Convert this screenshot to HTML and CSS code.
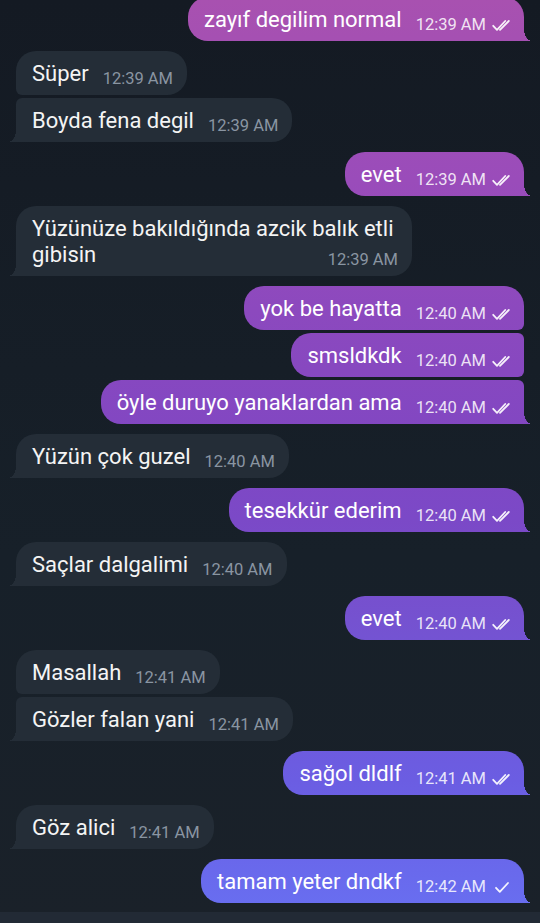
FILE: index.html
```html
<!DOCTYPE html>
<html lang="tr">
<head>
  <meta charset="UTF-8">
  <meta name="viewport" content="width=device-width, initial-scale=1">
  <title>Sohbet</title>
  <link rel="stylesheet" href="styles.css">
</head>
<body>

  <div class="chat">
    <div class="msg out tail">zayıf degilim normal<span class="meta">12:39 AM<svg class="ticks" viewBox="0 0 22 13"><path d="M1.2 6.8 L5 10.8 L13.2 2"/><path d="M8 10.8 L16.8 2"/></svg></span></div>

    <div class="msg in head">Süper<span class="meta">12:39 AM</span></div>
    <div class="msg in after tail">Boyda fena degil<span class="meta">12:39 AM</span></div>

    <div class="msg out tail">evet<span class="meta">12:39 AM<svg class="ticks" viewBox="0 0 22 13"><path d="M1.2 6.8 L5 10.8 L13.2 2"/><path d="M8 10.8 L16.8 2"/></svg></span></div>

    <div class="msg in tail wide">Yüzünüze bakıldığında azcik balık etli gibisin<span class="meta">12:39 AM</span></div>

    <div class="msg out head">yok be hayatta<span class="meta">12:40 AM<svg class="ticks" viewBox="0 0 22 13"><path d="M1.2 6.8 L5 10.8 L13.2 2"/><path d="M8 10.8 L16.8 2"/></svg></span></div>
    <div class="msg out after head">smsldkdk<span class="meta">12:40 AM<svg class="ticks" viewBox="0 0 22 13"><path d="M1.2 6.8 L5 10.8 L13.2 2"/><path d="M8 10.8 L16.8 2"/></svg></span></div>
    <div class="msg out after tail">öyle duruyo yanaklardan ama<span class="meta">12:40 AM<svg class="ticks" viewBox="0 0 22 13"><path d="M1.2 6.8 L5 10.8 L13.2 2"/><path d="M8 10.8 L16.8 2"/></svg></span></div>

    <div class="msg in tail">Yüzün çok guzel<span class="meta">12:40 AM</span></div>

    <div class="msg out tail">tesekkür ederim<span class="meta">12:40 AM<svg class="ticks" viewBox="0 0 22 13"><path d="M1.2 6.8 L5 10.8 L13.2 2"/><path d="M8 10.8 L16.8 2"/></svg></span></div>

    <div class="msg in tail">Saçlar dalgalimi<span class="meta">12:40 AM</span></div>

    <div class="msg out tail">evet<span class="meta">12:40 AM<svg class="ticks" viewBox="0 0 22 13"><path d="M1.2 6.8 L5 10.8 L13.2 2"/><path d="M8 10.8 L16.8 2"/></svg></span></div>

    <div class="msg in head">Masallah<span class="meta">12:41 AM</span></div>
    <div class="msg in after tail">Gözler falan yani<span class="meta">12:41 AM</span></div>

    <div class="msg out tail">sağol dldlf<span class="meta">12:41 AM<svg class="ticks" viewBox="0 0 22 13"><path d="M1.2 6.8 L5 10.8 L13.2 2"/><path d="M8 10.8 L16.8 2"/></svg></span></div>

    <div class="msg in tail">Göz alici<span class="meta">12:41 AM</span></div>

    <div class="msg out tail">tamam yeter dndkf<span class="meta">12:42 AM<svg class="ticks" viewBox="0 0 22 13"><path d="M4 6.8 L7.8 10.8 L16 2"/></svg></span></div>
  </div>

  <div class="bar"></div>

</body>
</html>
```

FILE: styles.css
```css
body {
  margin: 0;
  height: 100vh;
  overflow: hidden;
  display: flex;
  flex-direction: column;
  background: linear-gradient(180deg, #141a23 0%, #172029 60%, #1a2129 100%);
  font-family: Roboto, 'Noto Sans', sans-serif;
  color: #f4f4f4;
}

.chat {
  flex: 1;
  min-height: 0;
  overflow: hidden;
  display: flex;
  flex-direction: column;
  justify-content: flex-end;
  padding: 0 16px 9px;
}

.msg {
  position: relative;
  flex: none;
  max-width: 440px;
  margin-top: 10px;
  padding: 10px 10px 8px 16px;
  border-radius: 20px;
  font-size: 22px;
  line-height: 26px;
}

.msg.after {
  margin-top: 3px;
}

.in {
  align-self: flex-start;
  padding-right: 14px;
  background: #242d37;
}

.out {
  align-self: flex-end;
  color: #fff;
  background: linear-gradient(180deg, #a851b0 0px, #9a4cba 180px, #8c49be 310px, #8247c2 430px, #7b49c7 520px, #7552d0 620px, #6b5de2 780px, #6870f2 923px) fixed;
}

.wide {
  max-width: 366px;
}

.meta {
  float: right;
  display: flex;
  align-items: center;
  gap: 6px;
  margin: 10px 0 0 14px;
  font-size: 16.5px;
  line-height: 16px;
  color: #8a95a2;
}

.out .meta {
  color: rgba(255, 255, 255, 0.86);
}

.ticks {
  width: 22px;
  height: 13px;
  fill: none;
  stroke: rgba(255, 255, 255, 0.92);
  stroke-width: 1.8;
  stroke-linecap: round;
  stroke-linejoin: round;
}

/* corners inside a group */
.in.head { border-bottom-left-radius: 6px; }
.in.after { border-top-left-radius: 6px; }
.out.head { border-bottom-right-radius: 6px; }
.out.after { border-top-right-radius: 6px; }

/* tails */
.in.tail { border-bottom-left-radius: 0; }
.out.tail { border-bottom-right-radius: 0; }

.tail::before {
  content: '';
  position: absolute;
  bottom: 0;
  width: 8px;
  height: 12px;
  background: inherit;
}

.in.tail::before {
  left: -8px;
  -webkit-mask: radial-gradient(ellipse 8px 12px at 0 0, transparent 98%, #000 100%);
  mask: radial-gradient(ellipse 8px 12px at 0 0, transparent 98%, #000 100%);
}

.out.tail::before {
  right: -8px;
  -webkit-mask: radial-gradient(ellipse 8px 12px at 100% 0, transparent 98%, #000 100%);
  mask: radial-gradient(ellipse 8px 12px at 100% 0, transparent 98%, #000 100%);
}

.bar {
  flex: none;
  height: 11px;
  background: #222a35;
}
```
